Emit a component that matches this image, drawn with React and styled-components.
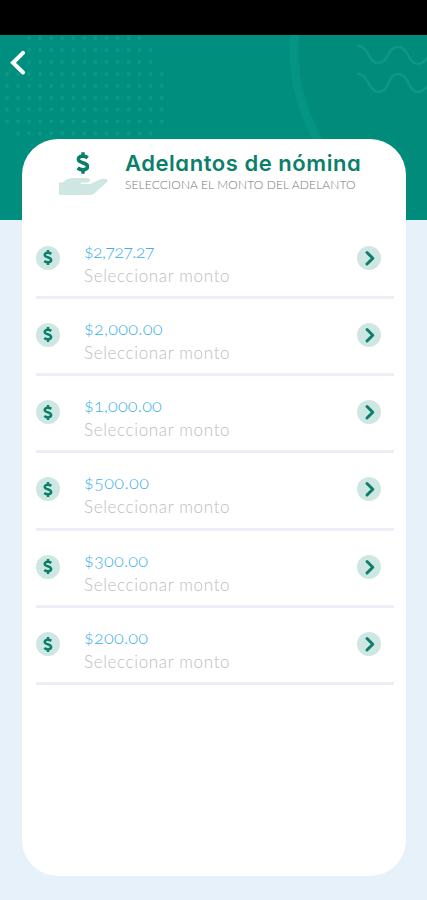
import React from 'react';
import styled, { createGlobalStyle } from 'styled-components';

const colors = {
    teal: '#008f7e',
    tealDark: '#0b7f6a',
    mint: '#cfe7e2',
    blue: '#41b0e8',
    gray: '#bdbdbd',
    line: '#ebeef5',
    page: '#e7f1fa',
}

const GlobalStyle = createGlobalStyle`
    * {
        box-sizing: border-box;
    }

    body {
        margin: 0;
        background: ${colors.page};
        font-family: Lato, "Liberation Sans", sans-serif;
    }
`

const Screen = styled.div`
    width: 427px;
    height: 900px;
    display: flex;
    flex-direction: column;
    overflow: hidden;
    background: ${colors.page};
`

const StatusBar = styled.div`
    flex: none;
    height: 35px;
    background: #000;
`

const Header = styled.header`
    position: relative;
    flex: none;
    height: 185px;
    background: ${colors.teal};
`

const Pattern = styled.svg`
    position: absolute;
    top: 0;
    left: 0;
`

const BackButton = styled.button`
    position: relative;
    display: flex;
    margin: 0;
    padding: 15px 9px;
    border: 0;
    background: none;
`

const Card = styled.main`
    position: relative;
    flex: none;
    height: 737px;
    margin: -81px 21px 0 22px;
    padding: 0 12px 0 14px;
    border-radius: 36px;
    background: #fff;
`

const CardHeader = styled.div`
    display: flex;
    height: 82.6px;
    padding: 12px 0 0 22px;
`

const Heading = styled.div`
    margin-left: 17px;
    white-space: nowrap;
`

const Title = styled.h1`
    margin: 0;
    color: ${colors.tealDark};
    font-family: Inter, "Open Sans", sans-serif;
    font-feature-settings: "cv11";
    font-size: 22px;
    font-weight: 600;
    line-height: 25px;
    letter-spacing: 0.55px;
`

const Subtitle = styled.p`
    margin: 0;
    color: #777;
    font-size: 12px;
    font-weight: 300;
    line-height: 18px;
    letter-spacing: 0.12px;
`

const List = styled.ul`
    margin: 0;
    padding: 0;
    list-style: none;
`

const Row = styled.li`
    display: flex;
    align-items: flex-start;
    height: 77.3px;
    padding: 17px 13px 0 0;
    border-bottom: 3px solid ${colors.line};
`

const Circle = styled.span`
    display: flex;
    flex: none;
    align-items: center;
    justify-content: center;
    width: 24px;
    height: 24px;
    margin-top: 7px;
    border-radius: 50%;
    background: ${colors.mint};
`

const RowText = styled.div`
    flex: 1;
    margin-left: 24px;
    white-space: nowrap;
`

const Amount = styled.div`
    color: ${colors.blue};
    font-size: 18px;
    font-weight: 300;
    font-variant-numeric: oldstyle-nums;
    line-height: 24px;
    letter-spacing: ${props => props.$tracking}px;
`

const Hint = styled.div`
    color: ${colors.gray};
    font-size: 17px;
    font-weight: 300;
    line-height: 25px;
    letter-spacing: 0.65px;
`

const amounts = [
    { value: '$2,727.27', tracking: -0.7 },
    { value: '$2,000.00', tracking: 0.3 },
    { value: '$1,000.00', tracking: 0.2 },
    { value: '$500.00', tracking: 0.4 },
    { value: '$300.00', tracking: 0.25 },
    { value: '$200.00', tracking: 0.25 },
]

// first and last dot of every row of the header grid
const dotRows = [[2, 12], [2, 13], [2, 13], [0, 14], [0, 14], [0, 14], [0, 14], [0, 14], [1, 13]]

const HeaderPattern = () => (
    <Pattern width="427" height="185" viewBox="0 0 427 185" fill="none">
        <path d="M297 0C293 39 302 70 321 108L360 185H427V0Z" fill="#008b7b" />
        <path d="M295 0C291 39 300 70 319 108" stroke="#07998a" strokeWidth="9" opacity=".6" />
        {dotRows.map(([first, last], row) =>
            Array.from({ length: last - first + 1 }, (_, i) => (
                <circle
                    key={`${row}-${i}`}
                    cx={7 + (first + i) * 11.05}
                    cy={3.2 + row * 11.9}
                    r="2"
                    fill="#0a9a88"
                />
            ))
        )}
        <g stroke="#119988" strokeWidth="2.6" opacity=".85">
            <path d="M357 11C368 9 368 28 378 28C389 28 387 12 398 12C409 12 408 29 418 29C424 29 425 25 428 22" />
            <path d="M357 39C368 37 368 57 379 57C390 57 387 39 398 39C409 39 408 57 418 57C424 57 425 53 428 51" />
        </g>
    </Pattern>
)

const DollarSign = ({ width, height }) => (
    <svg width={width} height={height} viewBox="0 0 12 20" fill="none" stroke={colors.tealDark}>
        <path d="M6 0V4M6 16V20" strokeWidth="3.2" />
        <path
            d="M10.4 5.2C8.7 4 6.9 3.6 5.2 3.7C2.2 3.9 1 6 2.1 7.8C3.4 10 9 9.5 10 12.4C10.8 14.8 8.7 16.3 6.1 16.3C4.2 16.3 2.5 15.7 1 14.6"
            strokeWidth="3.4"
        />
    </svg>
)

const HandIcon = () => (
    <svg width="50" height="46" viewBox="0 0 50 46">
        <path
            d="M1 31.5H5C8 28 11 27 15 27H29C33 27 33 31.5 29 31.5H23V33H32L43 28C47 27 51 28 49 31L38 41C36 43 34 44 31 44H1Z"
            fill={colors.mint}
        />
        <g transform="translate(18.5 1)">
            <DollarSign width="13" height="22" />
        </g>
    </svg>
)

const Chevron = () => (
    <svg width="24" height="24" viewBox="0 0 24 24" fill="none">
        <path
            d="M10 6.5L15.8 12.3L10 18"
            stroke={colors.tealDark}
            strokeWidth="3"
            strokeLinecap="round"
            strokeLinejoin="round"
        />
    </svg>
)

const App = () => {
    return (
        <Screen>
            <GlobalStyle />
            <StatusBar />
            <Header>
                <HeaderPattern />
                <BackButton aria-label="Regresar">
                    <svg width="18" height="26" viewBox="0 0 18 26" fill="none">
                        <path d="M14 2.8L4 12.8L14 22.5" stroke="#fff" strokeWidth="4" strokeLinecap="round" />
                    </svg>
                </BackButton>
            </Header>
            <Card>
                <CardHeader>
                    <HandIcon />
                    <Heading>
                        <Title>Adelantos de nómina</Title>
                        <Subtitle>SELECCIONA EL MONTO DEL ADELANTO</Subtitle>
                    </Heading>
                </CardHeader>
                <List>
                    {amounts.map(({ value, tracking }) => (
                        <Row key={value}>
                            <Circle>
                                <DollarSign width="10" height="15" />
                            </Circle>
                            <RowText>
                                <Amount $tracking={tracking}>{value}</Amount>
                                <Hint>Seleccionar monto</Hint>
                            </RowText>
                            <Circle>
                                <Chevron />
                            </Circle>
                        </Row>
                    ))}
                </List>
            </Card>
        </Screen>
    )
}

export default App;
